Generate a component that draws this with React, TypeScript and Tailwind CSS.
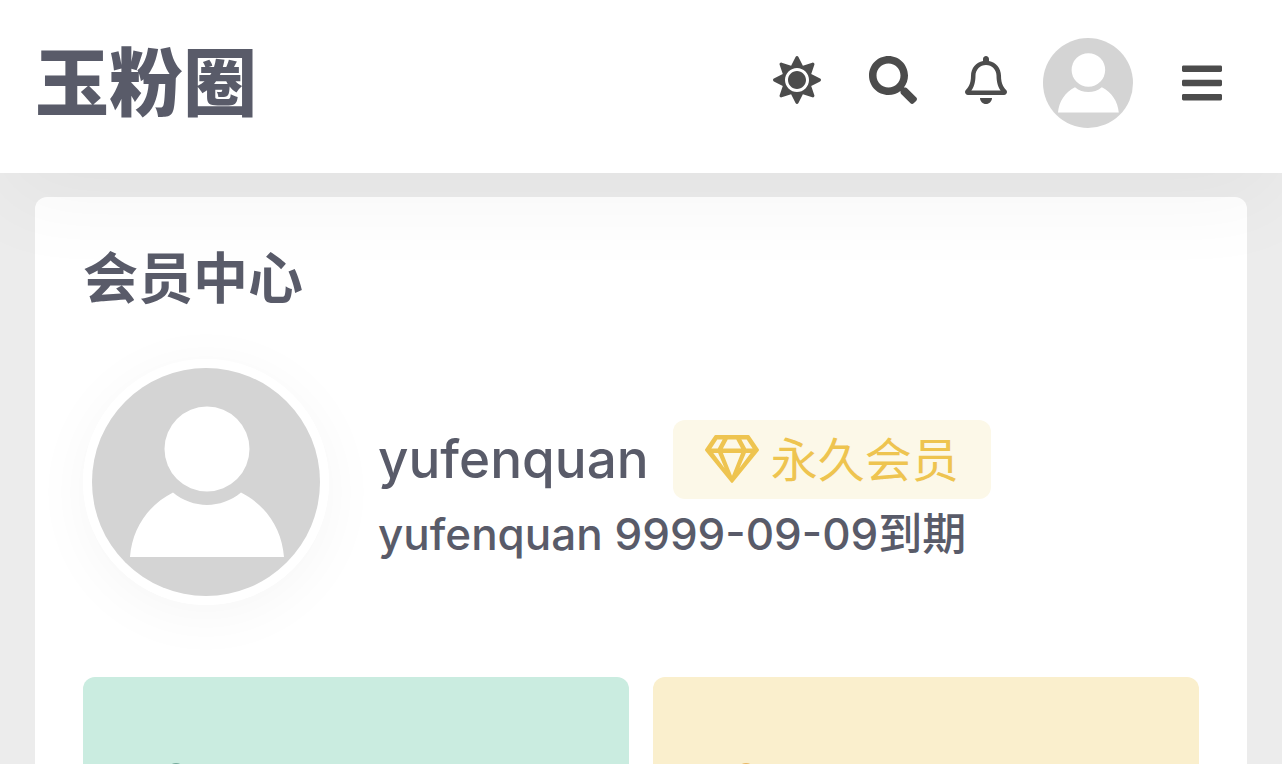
import React from 'react';
import { FaBars, FaRegBell, FaRegGem, FaSearch, FaSun } from 'react-icons/fa';
import { clsx } from 'clsx';

function DefaultAvatar({ className }: { className?: string }) {
    return (
        <svg viewBox="0 0 228 228" className={clsx('block rounded-full bg-[#d4d4d4]', className)} aria-hidden="true">
            <circle cx="115" cy="81" r="42.5" fill="#fff" />
            <path d="M38 189 C40 161 56 137 81 124.500 C101 141 129 141 149 124.500 C174 137 190 161 192 189 Z" fill="#fff" />
        </svg>
    );
}

function Header() {
    return (
        <header className="relative z-10 flex h-[173px] items-center justify-between bg-white pb-[7px] pl-[35px] pr-[60px] shadow-[0_30px_90px_rgba(0,0,0,0.04)]">
            <a href="#" className="text-[74px] leading-[90px] font-black">
                玉粉圈
            </a>
            <nav className="flex items-center text-[#4c4c4c]">
                <div className="flex items-center gap-12 pb-1.5">
                    <button type="button" aria-label="切换主题">
                        <FaSun className="h-12 w-12" />
                    </button>
                    <button type="button" aria-label="搜索">
                        <FaSearch className="h-12 w-12" />
                    </button>
                    <button type="button" aria-label="通知">
                        <FaRegBell className="h-12 w-[42px]" />
                    </button>
                </div>
                <a href="#" aria-label="会员中心" className="ml-9">
                    <DefaultAvatar className="h-[90px] w-[90px]" />
                </a>
                <button type="button" aria-label="菜单" className="ml-[49px]">
                    <FaBars className="h-[46px] w-10" />
                </button>
            </nav>
        </header>
    );
}

interface StatCardProps {
    color: string;
    dotColor: string;
}

function StatCard({ color, dotColor }: StatCardProps) {
    return (
        <div className={clsx('h-[260px] rounded-xl px-[84px] pt-[86px]', color)}>
            <div className={clsx('h-[18px] w-[18px] rounded-full', dotColor)} />
        </div>
    );
}

export default function App() {
    return (
        <div className="h-screen overflow-hidden bg-[#ececec] font-[Inter,'Noto_Sans_CJK_SC',sans-serif] text-[#595b69]">
            <Header />
            <main className="mx-[35px] mt-6 rounded-xl bg-white p-12">
                <h1 className="text-[55px] leading-[66px] font-bold">会员中心</h1>
                <section className="mt-12 flex items-center gap-[49px]">
                    <div className="shrink-0 rounded-full border-[9px] border-white shadow-[0_10px_60px_rgba(0,0,0,0.04)]">
                        <DefaultAvatar className="h-[228px] w-[228px]" />
                    </div>
                    <div className="pt-6 font-medium">
                        <div className="flex items-center gap-6">
                            <h2 className="text-[53px] leading-[79px]">yufenquan</h2>
                            <span className="flex items-center gap-3 rounded-xl bg-[#fcf8e8] px-8 text-[47px] leading-[79px] font-normal text-[#eec450]">
                                <FaRegGem className="h-12 w-[54px]" />
                                永久会员
                            </span>
                        </div>
                        <p className="text-[44px] leading-[70px]">yufenquan 9999-09-09到期</p>
                    </div>
                </section>
                <section className="mt-[72px] grid grid-cols-2 gap-6">
                    <StatCard color="bg-[#caece0]" dotColor="bg-[#76aa9b]" />
                    <StatCard color="bg-[#faefcd]" dotColor="bg-[#e8b765]" />
                </section>
            </main>
        </div>
    );
}
